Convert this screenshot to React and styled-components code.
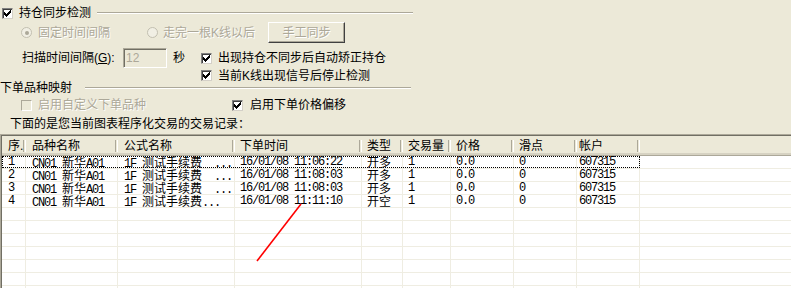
import React from 'react';
import styled, { createGlobalStyle } from 'styled-components';

const Global = createGlobalStyle`
  html, body { margin: 0; padding: 0; background: #ECE9D8; }
  body {
    font-family: "Liberation Sans", "Noto Sans CJK SC", sans-serif;
    font-size: 12px;
    color: #000;
  }
`;

const Window = styled.div`
  position: relative;
  width: 791px;
  height: 288px;
  overflow: hidden;
  background: #ECE9D8;
  display: flex;
  flex-direction: column;
`;

const Row = styled.div`
  display: flex;
  align-items: center;
  height: ${(p) => p.$h}px;
  padding-top: ${(p) => p.$pt || 0}px;
  padding-left: ${(p) => p.$pl || 0}px;
  margin-top: ${(p) => p.$mt || 0}px;
  flex: none;
  white-space: nowrap;
  line-height: 14px;
`;

const GroupHead = styled(Row)`
  width: 411px;
`;

const Etched = styled.div`
  flex: 1;
  height: 0;
  border-top: 1px solid #ACA899;
  border-bottom: 1px solid #FFFFFF;
  margin-left: ${(p) => p.$ml}px;
`;

const Option = styled.div`
  display: flex;
  align-items: center;
  width: ${(p) => (p.$w ? `${p.$w}px` : 'auto')};
  flex: none;
`;

const Label = styled.span`
  margin-left: ${(p) => p.$ml ?? 6}px;
  color: ${(p) => (p.$disabled ? '#ACA899' : '#000')};
  text-shadow: ${(p) => (p.$disabled ? '1px 1px 0 #FFFFFF' : 'none')};
  width: ${(p) => (p.$w ? `${p.$w}px` : 'auto')};
  flex: none;
`;

const Box = styled.span`
  box-sizing: border-box;
  width: 11px;
  height: 11px;
  flex: none;
  display: inline-flex;
  align-items: center;
  justify-content: center;
  background: ${(p) => (p.$disabled ? '#ECE9D8' : '#FFFFFF')};
  border: 1px solid;
  border-color: ${(p) => (p.$disabled ? '#ACA899 #FFFFFF #FFFFFF #ACA899' : '#808080 #D4D0C8 #D4D0C8 #808080')};
  box-shadow: ${(p) => (p.$disabled ? 'none' : 'inset 1px 1px 0 #404040')};
`;

const Check = ({ checked, disabled }) => (
  <Box $disabled={disabled}>
    {checked && (
      <svg width="7" height="7" viewBox="0 0 7 7" shapeRendering="crispEdges">
        <path d="M0 2h1v1h1v1h1v-1h1v-1h1v-1h1v-1h1v3h-1v1h-1v1h-1v1h-1v1h-1v-1h-1v-1h-1v-1h-1z" fill="#000" />
      </svg>
    )}
  </Box>
);

const RadioRing = styled.span`
  box-sizing: border-box;
  width: 11px;
  height: 11px;
  border-radius: 50%;
  flex: none;
  display: inline-flex;
  align-items: center;
  justify-content: center;
  border: 1px solid #C2BFB0;
  background: #F1EFE4;
`;

const RadioDot = styled.span`
  width: 4px;
  height: 4px;
  border-radius: 50%;
  background: #ACA899;
`;

const Radio = ({ checked }) => <RadioRing>{checked && <RadioDot />}</RadioRing>;

const Button = styled.div`
  box-sizing: border-box;
  width: 77px;
  height: 21px;
  flex: none;
  display: flex;
  align-items: center;
  justify-content: center;
  background: #ECE9D8;
  border: 1px solid;
  border-color: #FFFFFF #404040 #404040 #FFFFFF;
  box-shadow: inset -1px -1px 0 #ACA899;
  color: #ACA899;
  text-shadow: 1px 1px 0 #FFFFFF;
`;

const Input = styled.div`
  box-sizing: border-box;
  width: 44px;
  height: 20px;
  flex: none;
  display: flex;
  align-items: center;
  padding-left: 2px;
  background: #ECE9D8;
  border: 1px solid;
  border-color: #ACA899 #FFFFFF #FFFFFF #ACA899;
  box-shadow: inset 1px 1px 0 #716F64;
  color: #ACA899;
  font-family: "Liberation Sans", sans-serif;
`;

const Frame = styled.div`
  margin-top: 3px;
  flex: 1;
  min-height: 0;
  border-top: 1px solid #ACA899;
  border-left: 1px solid #ACA899;
  display: flex;
  flex-direction: column;
`;

const FrameInner = styled.div`
  flex: 1;
  border-top: 1px solid #716F64;
  border-left: 1px solid #716F64;
  background: #FFFFFF;
  display: flex;
  flex-direction: column;
  overflow: hidden;
`;

const Header = styled.div`
  display: flex;
  height: 20px;
  box-sizing: border-box;
  background: #ECE9D8;
  border-bottom: 1px solid #ACA899;
  box-shadow: inset 0 -2px 0 #D6D2C2;
  flex: none;
`;

const HeadCell = styled.div`
  position: relative;
  box-sizing: border-box;
  width: ${(p) => p.$w}px;
  flex: none;
  padding-left: ${(p) => p.$pl}px;
  display: flex;
  align-items: center;
  line-height: 14px;
  white-space: nowrap;
  &::after {
    content: '';
    position: absolute;
    right: 0;
    top: 4px;
    bottom: 3px;
    width: 1px;
    border-left: 1px solid #ACA899;
    border-right: 1px solid #FFFFFF;
  }
`;

const Body = styled.div`
  display: flex;
  flex-direction: column;
`;

const ListRow = styled.div`
  display: flex;
  height: 13px;
  box-sizing: border-box;
  border-bottom: 1px solid #EFEDE2;
  flex: none;
`;

const Cells = styled.div`
  display: flex;
  outline: ${(p) => (p.$focus ? '1px dotted #000' : 'none')};
  outline-offset: -1px;
`;

const Cell = styled.div`
  box-sizing: border-box;
  width: ${(p) => p.$w}px;
  height: 12px;
  flex: none;
  padding-left: ${(p) => p.$pl}px;
  border-right: 1px solid #EFEDE2;
  font-family: "Liberation Mono", monospace;
  font-size: 12px;
  letter-spacing: -1.2px;
  line-height: 12px;
  white-space: pre;
`;

const Wide = styled.span`
  font-family: "Noto Sans CJK SC", sans-serif;
  font-size: 12px;
  line-height: 12px;
  letter-spacing: 0;
`;

const Overlay = styled.svg`
  position: absolute;
  left: 0;
  top: 0;
  pointer-events: none;
`;

const Mixed = ({ text }) =>
  text
    .split(/([\u3000-\u9fff\uff00-\uffef]+)/)
    .filter((part) => part !== '')
    .map((part, i) =>
      /[\u3000-\u9fff\uff00-\uffef]/.test(part) ? <Wide key={i}>{part}</Wide> : <React.Fragment key={i}>{part}</React.Fragment>
    );

const columns = [
  { title: '序.', w: 24, pl: 6 },
  { title: '品种名称', w: 92, pl: 6 },
  { title: '公式名称', w: 117, pl: 6 },
  { title: '下单时间', w: 127, pl: 5 },
  { title: '类型', w: 41, pl: 5 },
  { title: '交易量', w: 48, pl: 5 },
  { title: '价格', w: 63, pl: 5 },
  { title: '滑点', w: 63, pl: 5 },
  { title: '帐户', w: 63, pl: 2 },
];

const rows = [
  ['1', 'CN01 新华A01', '1F 测试手续费  ...', '16/01/08 11:06:22', '开多', '1', '0.0', '0', '607315'],
  ['2', 'CN01 新华A01', '1F 测试手续费  ...', '16/01/08 11:08:03', '开多', '1', '0.0', '0', '607315'],
  ['3', 'CN01 新华A01', '1F 测试手续费  ...', '16/01/08 11:08:03', '开多', '1', '0.0', '0', '607315'],
  ['4', 'CN01 新华A01', '1F 测试手续费...', '16/01/08 11:11:10', '开空', '1', '0.0', '0', '607315'],
];

const emptyRows = Array.from({ length: 8 }, () => Array(9).fill(''));

export default function App() {
  return (
    <>
      <Global />
      <Window>
        <GroupHead $h={18} $pt={4} $pl={2}>
          <Check checked />
          <Label>持仓同步检测</Label>
          <Etched $ml={6} />
        </GroupHead>

        <Row $h={21} $pl={21}>
          <Option $w={126}>
            <Radio checked />
            <Label $disabled>固定时间间隔</Label>
          </Option>
          <Option $w={121}>
            <Radio />
            <Label $disabled $ml={5}>走完一根K线以后</Label>
          </Option>
          <Button>手工同步</Button>
        </Row>

        <Row $h={20} $pl={22} $mt={5}>
          <Label $ml={0} $w={101}>
            扫描时间间隔(<u>G</u>):
          </Label>
          <Input>12</Input>
          <Label $w={28}>秒</Label>
          <Check checked />
          <Label $ml={6}>出现持仓不同步后自动矫正持仓</Label>
        </Row>

        <Row $h={15} $pl={201}>
          <Check checked />
          <Label $ml={6}>当前K线出现信号后停止检测</Label>
        </Row>

        <GroupHead $h={10}>
          <Label $ml={0}>下单品种映射</Label>
          <Etched $ml={13} />
        </GroupHead>

        <Row $h={24} $pl={21}>
          <Option $w={211}>
            <Check disabled />
            <Label $disabled>启用自定义下单品种</Label>
          </Option>
          <Check checked />
          <Label $ml={7}>启用下单价格偏移</Label>
        </Row>

        <Row $h={14} $pl={10}>
          <Label $ml={0}>下面的是您当前图表程序化交易的交易记录：</Label>
        </Row>

        <Frame>
          <FrameInner>
            <Header>
              {columns.map((c) => (
                <HeadCell key={c.title} $w={c.w} $pl={c.pl}>
                  {c.title}
                </HeadCell>
              ))}
            </Header>
            <Body>
              {[...rows, ...emptyRows].map((r, ri) => (
                <ListRow key={ri}>
                  <Cells $focus={ri === 0}>
                    {r.map((v, ci) => (
                      <Cell key={ci} $w={columns[ci].w} $pl={columns[ci].pl}>
                        <Mixed text={v} />
                      </Cell>
                    ))}
                  </Cells>
                </ListRow>
              ))}
            </Body>
          </FrameInner>
        </Frame>

        <Overlay width="791" height="288" viewBox="0 0 791 288">
          <line x1="301" y1="204" x2="257" y2="261" stroke="#FF0000" strokeWidth="1.6" />
        </Overlay>
      </Window>
    </>
  );
}
